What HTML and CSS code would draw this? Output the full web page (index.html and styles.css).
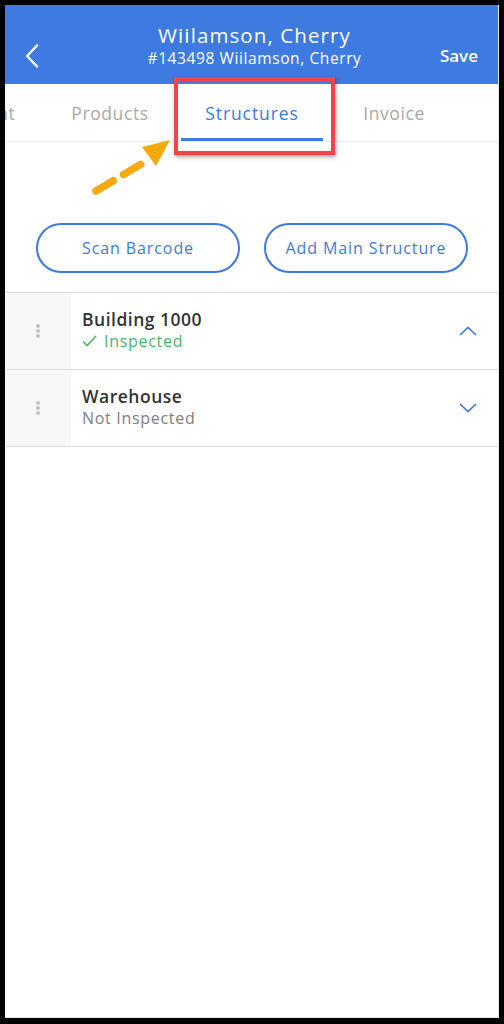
FILE: index.html
```html
<!DOCTYPE html>
<html lang="en">
<head>
    <meta charset="UTF-8">
    <meta name="viewport" content="width=device-width, initial-scale=1.0">
    <title>Structures</title>
    <link rel="stylesheet" href="styles.css">
</head>
<body>
    <div class="screen">
        <header class="topbar">
            <button class="back" aria-label="Back">
                <svg width="14" height="24" viewBox="0 0 14 24">
                    <path d="M12 1.5 L2 12 L12 22.5" fill="none" stroke="#fff" stroke-width="2.4" stroke-linecap="round" stroke-linejoin="round"/>
                </svg>
            </button>
            <div class="titles">
                <h1>Wiilamson, Cherry</h1>
                <p>#143498 Wiilamson, Cherry</p>
            </div>
            <button class="save">Save</button>
        </header>

        <nav class="tabs">
            <div class="tab-track">
                <span class="tab">Equipment</span>
                <span class="tab">Products</span>
                <span class="tab active">Structures</span>
                <span class="tab">Invoice</span>
                <span class="tab">Contract</span>
            </div>
        </nav>

        <div class="actions">
            <button class="pill">Scan Barcode</button>
            <button class="pill">Add Main Structure</button>
        </div>

        <ul class="structures">
            <li class="row">
                <div class="handle"><span class="dots"></span></div>
                <div class="info">
                    <div class="name">Building 1000</div>
                    <div class="status done">
                        <svg width="15" height="12" viewBox="0 0 15 12">
                            <path d="M1 6.5 L5 10.5 L14 1" fill="none" stroke="#4cb56b" stroke-width="1.6"/>
                        </svg>
                        Inspected
                    </div>
                </div>
                <div class="toggle">
                    <svg width="18" height="10" viewBox="0 0 18 10">
                        <path d="M1 9 L9 1.5 L17 9" fill="none" stroke="#3d7be0" stroke-width="1.7"/>
                    </svg>
                </div>
            </li>
            <li class="row">
                <div class="handle"><span class="dots"></span></div>
                <div class="info">
                    <div class="name">Warehouse</div>
                    <div class="status">Not Inspected</div>
                </div>
                <div class="toggle">
                    <svg width="18" height="10" viewBox="0 0 18 10">
                        <path d="M1 1 L9 8.5 L17 1" fill="none" stroke="#3d7be0" stroke-width="1.7"/>
                    </svg>
                </div>
            </li>
        </ul>

        <!-- annotation drawn over the screenshot -->
        <div class="highlight"></div>
        <svg class="pointer" width="100" height="70" viewBox="0 0 100 70">
            <path d="M6 58 L58 27" fill="none" stroke="#f5aa10" stroke-width="7.5" stroke-linecap="round" stroke-dasharray="20 12"/>
            <polygon points="52,14 80,7 66,33" fill="#f5aa10"/>
        </svg>
    </div>
</body>
</html>
```

FILE: styles.css
```css
html, body {
    margin: 0;
    height: 100%;
}

body {
    background-color: #000;
    font-family: "Open Sans", "Liberation Sans", sans-serif;
    padding: 5px 5px 6px 5px;
    box-sizing: border-box;
}

.screen {
    position: relative;
    background-color: #fff;
    height: 100%;
    overflow: hidden;
    border-right: 1px solid #e6e6e6;
    border-bottom: 1px solid #e6e6e6;
    box-sizing: border-box;
}

button {
    font-family: inherit;
    background: none;
    border: none;
    padding: 0;
    cursor: pointer;
}

.topbar {
    height: 79px;
    background-color: #3d7be0;
    color: #fff;
    display: flex;
    align-items: center;
    padding: 0 20px 0 20px;
    box-sizing: border-box;
}

.back {
    width: 40px;
    display: flex;
    align-items: center;
    margin-top: 22px;
}

.titles {
    flex: 1;
    text-align: center;
    padding-left: 6px;
}

.titles h1 {
    margin: 0;
    font-size: 20.5px;
    font-weight: 500;
    line-height: 26px;
    letter-spacing: 1.1px;
}

.titles p {
    margin: 0;
    font-size: 15.5px;
    line-height: 20px;
    letter-spacing: 0.6px;
}

.save {
    color: #fff;
    font-size: 17px;
    font-weight: 600;
    width: 40px;
    text-align: right;
    margin-top: 22px;
}

.tabs {
    height: 57px;
    border-bottom: 1px solid #ececec;
    overflow: hidden;
}

.tab-track {
    display: flex;
    margin-left: -108px;
    height: 100%;
}

.tab {
    flex: 0 0 142px;
    display: flex;
    align-items: center;
    justify-content: center;
    font-size: 17.5px;
    color: #a9a9a9;
    letter-spacing: 0.6px;
    box-sizing: border-box;
}

.tab.active {
    color: #3d7be0;
    font-weight: 500;
    letter-spacing: 0.9px;
    box-shadow: inset 0 -3px 0 #3d7be0;
}

.actions {
    display: flex;
    gap: 24px;
    padding: 81px 30px 19px 31px;
}

.pill {
    flex: 1;
    height: 50px;
    border: 2px solid #3d7be0;
    border-radius: 25px;
    color: #3d7be0;
    font-size: 16px;
    letter-spacing: 0.9px;
}

.structures {
    list-style: none;
    margin: 0;
    padding: 0;
    border-top: 1px solid #dedede;
}

.row {
    display: flex;
    height: 76px;
    border-bottom: 1px solid #dedede;
}

.handle {
    width: 66px;
    background-color: #f7f7f7;
    display: flex;
    align-items: center;
    justify-content: center;
}

.dots {
    width: 4px;
    height: 4px;
    border-radius: 50%;
    background-color: #c4c4c4;
    box-shadow: 0 -5px 0 #c4c4c4, 0 5px 0 #c4c4c4;
}

.info {
    flex: 1;
    display: flex;
    flex-direction: column;
    justify-content: center;
    padding-left: 11px;
    padding-bottom: 2px;
}

.name {
    font-size: 17.5px;
    font-weight: 600;
    color: #333;
    line-height: 22px;
    letter-spacing: 0.5px;
}

.status {
    font-size: 16px;
    color: #808080;
    line-height: 22px;
    letter-spacing: 0.7px;
    display: flex;
    align-items: center;
    gap: 7px;
}

.status.done {
    color: #4cb56b;
}

.toggle {
    width: 62px;
    display: flex;
    align-items: center;
    justify-content: center;
    padding-left: 2px;
    box-sizing: border-box;
}

.highlight {
    position: absolute;
    left: 169px;
    top: 72px;
    width: 161px;
    height: 78px;
    border: 4px solid #f4424b;
    box-sizing: border-box;
    box-shadow: 1px 2px 4px rgba(0, 0, 0, 0.35);
}

.pointer {
    position: absolute;
    left: 85px;
    top: 128px;
}
```
